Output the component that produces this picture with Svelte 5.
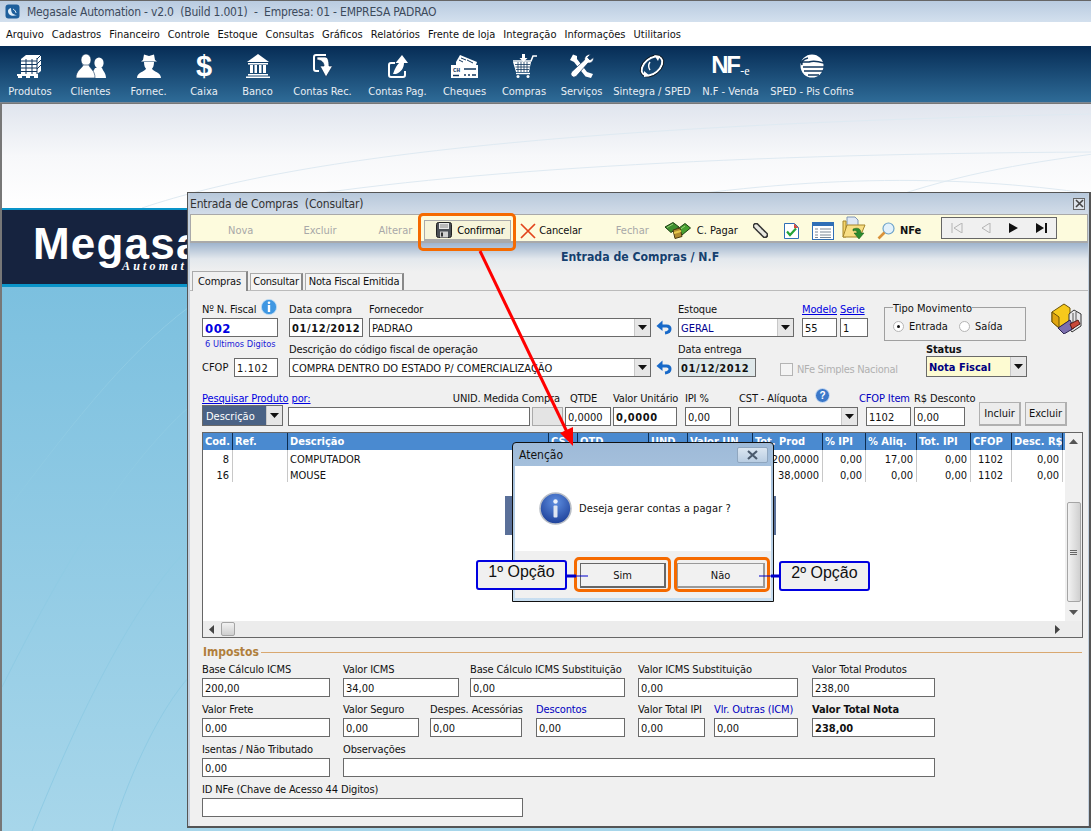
<script>
  const menu = ["Arquivo", "Cadastros", "Financeiro", "Controle", "Estoque", "Consultas", "Gráficos", "Relatórios", "Frente de loja", "Integração", "Informações", "Utilitarios"];

  const shortcuts = [
    { label: "Produtos", icon: "produtos", w: 44, gap: 8 },
    { label: "Clientes", icon: "clientes", w: 39, gap: 19 },
    { label: "Fornec.", icon: "fornec", w: 37, gap: 20 },
    { label: "Caixa", icon: "caixa", w: 28, gap: 23 },
    { label: "Banco", icon: "banco", w: 29, gap: 25 },
    { label: "Contas Rec.", icon: "rec", w: 59, gap: 21 },
    { label: "Contas Pag.", icon: "pag", w: 59, gap: 16 },
    { label: "Cheques", icon: "cheques", w: 43, gap: 16 },
    { label: "Compras", icon: "compras", w: 42, gap: 17 },
    { label: "Serviços", icon: "servicos", w: 41, gap: 16 },
    { label: "Sintegra / SPED", icon: "sintegra", w: 76, gap: 12 },
    { label: "N.F - Venda", icon: "nfe", w: 57, gap: 12 },
    { label: "SPED - Pis Cofins", icon: "sped", w: 82, gap: 12 }
  ];

  const columns = [
    { title: "Cod.", w: 30 },
    { title: "Ref.", w: 55 },
    { title: "Descrição", w: 261 },
    { title: "CST", w: 29 },
    { title: "QTD", w: 71 },
    { title: "UND", w: 39 },
    { title: "Valor UN", w: 65 },
    { title: "Tot. Prod", w: 70 },
    { title: "% IPI", w: 43 },
    { title: "% Aliq.", w: 51 },
    { title: "Tot. IPI", w: 54 },
    { title: "CFOP", w: 41 },
    { title: "Desc. R$", w: 51 }
  ];
  const template = columns.map((c) => c.w + "px").join(" ");

  const items = [
    ["8", "", "COMPUTADOR", "", "", "", "", "200,0000", "0,00", "17,00", "0,00", "1102", "0,00"],
    ["16", "", "MOUSE", "", "", "", "", "38,0000", "0,00", "0,00", "0,00", "1102", "0,00"]
  ];

  const taxRows = [
    [
      { label: "Base Cálculo ICMS", value: "200,00", w: 128, gap: 0, low: true },
      { label: "Valor ICMS", value: "34,00", w: 116, gap: 13 },
      { label: "Base Cálculo ICMS Substituição", value: "0,00", w: 155, gap: 11 },
      { label: "Valor ICMS Substituição", value: "0,00", w: 160, gap: 13 },
      { label: "Valor Total Produtos", value: "238,00", w: 123, gap: 14 }
    ],
    [
      { label: "Valor Frete", value: "0,00", w: 128, gap: 0 },
      { label: "Valor Seguro", value: "0,00", w: 76, gap: 13 },
      { label: "Despes. Acessórias", value: "0,00", w: 92, gap: 11 },
      { label: "Descontos", value: "0,00", w: 89, gap: 14, blue: true },
      { label: "Valor Total IPI", value: "0,00", w: 67, gap: 13 },
      { label: "Vlr. Outras (ICM)", value: "0,00", w: 84, gap: 9, blue: true },
      { label: "Valor Total Nota", value: "238,00", w: 123, gap: 14, strong: true }
    ],
    [
      { label: "Isentas / Não Tributado", value: "0,00", w: 128, gap: 0 },
      { label: "Observações", value: "", w: 592, gap: 13 }
    ],
    [{ label: "ID NFe (Chave de Acesso 44 Digitos)", value: "", w: 321, gap: 0 }]
  ];
</script>

{#snippet arrowButton()}
  <span class="drop"><svg width="9" height="5" viewBox="0 0 9 5"><path d="M0 0h9L4.5 5z" fill="#111" /></svg></span>
{/snippet}

{#snippet undo()}
  <svg class="undo" width="17" height="15" viewBox="0 0 17 15">
    <path d="M5 6H10.5C13 6 14 7.5 14 9C14 11 12.5 12.5 9 13" fill="none" stroke="#1769c9" stroke-width="3" />
    <path d="M0.5 6L6.5 0.5V11z" fill="#1769c9" />
  </svg>
{/snippet}

{#snippet infoDot(size)}
  <svg width={size} height={size} viewBox="0 0 16 16">
    <circle cx="8" cy="8" r="7.6" fill="#3f97e2" stroke="#bcdcf5" stroke-width="0.8" />
    <circle cx="8" cy="3.8" r="1.3" fill="#fff" />
    <rect x="6.8" y="6" width="2.4" height="7" fill="#fff" />
  </svg>
{/snippet}

{#snippet shortcutIcon(name)}
  {#if name === "produtos"}
    <svg width="26" height="24" viewBox="0 0 26 24">
      <path d="M4 5L9 1H24V17L20 20H4z" fill="#fff" />
      <path d="M4 7H20M4 10.5H20M4 14H20M4 17.5H20M9 5V20M15 5V20M20 4V20M20 5L24 1M20 10L24 6M20 15L24 11" stroke="#12375e" stroke-width="1" fill="none" />
      <rect x="0" y="20" width="21" height="2" fill="#fff" />
      <rect x="1" y="22" width="4" height="2" fill="#fff" /><rect x="9" y="22" width="4" height="2" fill="#fff" /><rect x="17" y="22" width="4" height="2" fill="#fff" />
    </svg>
  {:else if name === "clientes"}
    <svg width="30" height="24" viewBox="0 0 30 24">
      <ellipse cx="23" cy="9" rx="4.6" ry="5.6" fill="#fff" />
      <path d="M19 14C18 17 15 18 15 24H30C30 19 27 17 26 14z" fill="#fff" />
      <ellipse cx="10" cy="6" rx="5" ry="6" fill="#fff" stroke="#12375e" stroke-width="0.6" />
      <path d="M7 11C6 15 0 16 0 24H19C19 16 14 15 13 11z" fill="#fff" stroke="#12375e" stroke-width="0.6" />
    </svg>
  {:else if name === "fornec"}
    <svg width="24" height="24" viewBox="0 0 24 24">
      <path d="M6 6L7 0.5L12 2L17 0.5L18 6L20 7.5H4z" fill="#fff" />
      <path d="M7 8H17C17 12 16 13.5 15 14.5C16 18 24 18 24 24H0C0 18 8 18 9 14.5C8 13.5 7 12 7 8z" fill="#fff" />
    </svg>
  {:else if name === "caixa"}
    <span class="dollar">$</span>
  {:else if name === "banco"}
    <svg width="24" height="24" viewBox="0 0 24 24">
      <path d="M12 0L23 8H1z" fill="#fff" />
      <rect x="2" y="9" width="20" height="1.5" fill="#fff" />
      <path d="M4 11h3v8H4zM8.5 11h2.5v8H8.5zM13 11h2.5v8H13zM17 11h3v8h-3z" fill="#fff" />
      <rect x="2" y="20" width="20" height="1.5" fill="#fff" />
      <rect x="0" y="22.5" width="24" height="1.5" fill="#fff" />
    </svg>
  {:else if name === "rec"}
    <svg width="20" height="24" viewBox="0 0 20 24">
      <path d="M13 1H3Q1 1 1 3V15Q1 17 3 17H6" fill="none" stroke="#fff" stroke-width="2" />
      <path d="M4 3H12C15 3 16 7 16 12H19.5L13 23L7 12H11C11 8 8 6 4 6z" fill="#fff" stroke="#0c2c50" stroke-width="0.7" />
    </svg>
  {:else if name === "pag"}
    <svg width="20" height="24" viewBox="0 0 20 24">
      <path d="M7 9H3Q1 9 1 11V21Q1 23 3 23H15Q17 23 17 21V17" fill="none" stroke="#fff" stroke-width="2" />
      <path d="M5 20C7 14 9 11 11 9H7.5L14 1L20 9H16C16 14 13 18 8 20z" fill="#fff" />
    </svg>
  {:else if name === "cheques"}
    <svg width="27" height="24" viewBox="0 0 27 24">
      <path d="M5 8L9 1L26 8L25 11H5z" fill="#fff" />
      <path d="M10 4L15 6M8 6L12 8M16 6L22 9" stroke="#12375e" stroke-width="1" />
      <rect x="0" y="11" width="27" height="13" fill="#fff" />
      <text x="2" y="18" class="chq">CH</text>
      <path d="M13 15H25M2 21.5H8M13 21H15M17 21H19M21 21H25" stroke="#12375e" stroke-width="1.4" />
    </svg>
  {:else if name === "compras"}
    <svg width="25" height="24" viewBox="0 0 25 24">
      <path d="M1 7H19L21 2H25" fill="none" stroke="#fff" stroke-width="1.6" />
      <path d="M1 8H19L17 18H4z" fill="#fff" />
      <path d="M3 10.5H18M3.5 13H18M4 15.5H17M6 8V18M9 8V18M12 8V18M15 8V18" stroke="#12375e" stroke-width="0.8" />
      <path d="M7.5 4H10V0H13V4H15.5L11.5 8z" fill="#fff" />
      <path d="M4 19.5H18" stroke="#fff" stroke-width="1.4" />
      <circle cx="6" cy="22.5" r="1.5" fill="#fff" /><circle cx="16" cy="22.5" r="1.5" fill="#fff" />
    </svg>
  {:else if name === "servicos"}
    <svg width="24" height="24" viewBox="0 0 24 24">
      <path d="M3 0.5L7 2V5L17 18L23 20L21 24L15.5 22.5L4 8L0 6z" fill="#fff" />
      <path d="M23.5 3.5C24 7 21 9.5 18 9L6 22.5Q3.5 24 1.5 22Q0 20 1.5 18L14.5 6C14.5 2.5 17 0 20.5 0.5L17.5 3.5L20 6z" fill="#fff" stroke="#12375e" stroke-width="0.7" />
    </svg>
  {:else if name === "sintegra"}
    <svg width="26" height="24" viewBox="0 0 26 24">
      <ellipse cx="13" cy="12" rx="12" ry="7.5" transform="rotate(-40 13 12)" fill="none" stroke="#fff" stroke-width="2" />
      <ellipse cx="13" cy="12" rx="13.4" ry="9" transform="rotate(-40 13 12)" fill="none" stroke="#111" stroke-width="0.8" />
      <path d="M15 1L21 2L19 7zM5 17L11 22L5 23z" fill="#fff" />
      <path d="M11 8C9 11 9 13 11 16" stroke="#fff" stroke-width="1.4" fill="none" />
    </svg>
  {:else if name === "nfe"}
    <span class="nfe">NF<small>-e</small></span>
  {:else if name === "sped"}
    <svg width="24" height="24" viewBox="0 0 24 24">
      <circle cx="12" cy="12" r="11.5" fill="#fff" />
      <path d="M0 8H9Q14 6 24 9M3 13H24M4 17H23M8 21H19" stroke="#12375e" stroke-width="1.6" fill="none" />
      <path d="M8 4C3 5 1 8 2 11" stroke="#12375e" stroke-width="1.6" fill="none" />
    </svg>
  {/if}
{/snippet}

<div class="screen">
  <header class="titlebar">
    <svg width="15" height="15" viewBox="0 0 15 15">
      <rect x="0.5" y="0.5" width="14" height="14" rx="3" fill="#1e5f9c" />
      <path d="M3 7C3 11 7 13 12 11C8 11 6 9 6 4C4 4.5 3 5.5 3 7z" fill="#dfeefa" />
      <path d="M8 5C10 6 11 8 11 9" stroke="#dfeefa" fill="none" />
    </svg>
    <span>Megasale Automation - v2.0&nbsp; (Build 1.001)&nbsp; -&nbsp; Empresa: 01 - EMPRESA PADRAO</span>
  </header>

  <nav class="menubar">
    {#each menu as entry}
      <span>{entry}</span>
    {/each}
  </nav>

  <div class="shortcuts">
    {#each shortcuts as s}
      <div class="shortcut" style="width:{s.w}px;margin-left:{s.gap}px">
        <div class="shortcut-icon">{@render shortcutIcon(s.icon)}</div>
        <span>{s.label}</span>
      </div>
    {/each}
  </div>

  <main class="desktop">
    <div class="desk-top">
      <svg class="swirl" width="1091" height="104" viewBox="0 0 1091 104">
        <path d="M140 104C300 50 600 20 1091 10M230 104C400 70 700 50 1091 48M600 104C800 70 950 70 1091 90M860 104C950 70 1020 60 1091 50" fill="none" stroke="#dfeaf2" />
      </svg>
    </div>
    <div class="brand">
      <div class="brand-name">Megasale</div>
      <div class="brand-sub">Automation</div>
    </div>
    <div class="desk-blue">
      <svg class="swirl" width="187" height="544" viewBox="0 0 187 544">
        <path d="M0 230C60 150 120 70 187 20M0 400C60 280 120 180 187 120M30 544C80 420 130 320 187 260M110 544C130 480 160 420 187 390" fill="none" stroke="#8fcbe4" />
      </svg>
    </div>

    <section class="window">
      <div class="win-title">
        <span>Entrada de Compras&nbsp; (Consultar)</span>
        <span class="win-close"><svg width="9" height="9" viewBox="0 0 9 9"><path d="M1 1L8 8M8 1L1 8" stroke="#444" stroke-width="1.6" /></svg></span>
      </div>

      <div class="actions">
        <span class="act off nova">Nova</span>
        <span class="act off excluir">Excluir</span>
        <span class="act off alterar">Alterar</span>
        <button class="confirm">
          <svg width="16" height="16" viewBox="0 0 16 16">
            <rect x="0.5" y="0.5" width="15" height="15" rx="2" fill="#4b4f55" stroke="#222" />
            <rect x="3" y="1" width="10" height="6" fill="#e8e8e8" />
            <path d="M4 3H12M4 5H12" stroke="#888" />
            <rect x="4" y="9.5" width="8" height="6" fill="#d0d0d0" /><rect x="5" y="10.5" width="2" height="4" fill="#333" />
          </svg>
          Confirmar
        </button>
        <svg class="cancel-x" width="16" height="16" viewBox="0 0 16 16"><path d="M1 1L15 15M15 1L1 15" stroke="#e2441c" stroke-width="1.7" /></svg>
        <span class="act cancelar">Cancelar</span>
        <span class="act off fechar">Fechar</span>
        <svg class="money" width="26" height="17" viewBox="0 0 26 17">
          <path d="M0 5L8 0.5L14 5L6 10.5z" fill="#3f8f2f" stroke="#1c3f12" />
          <path d="M12 7.5L20 1.5L25.5 6L17 13z" fill="#46a030" stroke="#1c3f12" />
          <path d="M2 5.5L8 2M15 7.5L20 4" stroke="#9ad27a" fill="none" />
          <path d="M8 8L15 6L17 14.5L10 16.5z" fill="#b08c30" stroke="#4c3a10" />
          <path d="M9 11L16 9" stroke="#e8c84c" stroke-width="2" />
        </svg>
        <span class="act pagar">C. Pagar</span>
        <svg class="clip" width="15" height="15" viewBox="0 0 15 15">
          <path d="M3 3L12 12" stroke="#333" stroke-width="6.5" stroke-linecap="round" />
          <path d="M3 3L12 12" stroke="#e8e8e0" stroke-width="3.5" stroke-linecap="round" stroke-dasharray="2 1.5" />
        </svg>
        <svg class="doc" width="15" height="16" viewBox="0 0 15 16">
          <path d="M0.5 0.5H10.5L14.5 4.5V15.5H0.5z" fill="#fff" stroke="#2f6fb6" />
          <path d="M10 0.5V5H14.5z" fill="#d64a3a" />
          <path d="M3 8.5L6 12L12 5.5" fill="none" stroke="#23a338" stroke-width="2.2" />
        </svg>
        <svg class="list" width="22" height="18" viewBox="0 0 22 18">
          <rect x="0.5" y="0.5" width="21" height="17" fill="#fff" stroke="#2f6fb6" />
          <rect x="1" y="1" width="20" height="3" fill="#2f6fb6" />
          <path d="M3 7H6M8 7H19M3 10H6M8 10H19M3 13H6M8 13H19M3 15.5H6M8 15.5H19" stroke="#7a8794" />
        </svg>
        <svg class="folder" width="24" height="24" viewBox="0 0 24 24">
          <path d="M5 1H13L16 4V10H5z" fill="#dfe8f5" stroke="#7f95b4" />
          <path d="M1 5H4V21H1z" fill="#f5d56a" stroke="#a5852a" />
          <path d="M1 21L5 9H23L18 21z" fill="#f8de84" stroke="#a5852a" />
          <path d="M11 13C16 11 19 13 19 17H22L17 23L12 17H15C15 15 14 14 11 15z" fill="#2a8c2e" stroke="#175a1a" stroke-width="0.5" />
        </svg>
        <svg class="lens" width="18" height="18" viewBox="0 0 18 18">
          <circle cx="11.5" cy="6.5" r="5.5" fill="#e2f1fb" stroke="#6da3c9" stroke-width="1.2" />
          <path d="M7.5 10.5L1.5 16.5" stroke="#d9923a" stroke-width="2.6" />
        </svg>
        <b class="act nfe-act">NFe</b>
        <div class="pager">
          <svg width="12" height="10" viewBox="0 0 12 10"><path d="M1 0V10M11 0L3 5L11 10z" fill="none" stroke="#b4b4b4" /></svg>
          <svg width="10" height="10" viewBox="0 0 10 10"><path d="M9 0L1 5L9 10z" fill="none" stroke="#b4b4b4" /></svg>
          <svg width="9" height="10" viewBox="0 0 9 10"><path d="M0 0L9 5L0 10z" fill="#111" /></svg>
          <svg width="11" height="10" viewBox="0 0 11 10"><path d="M0 0L8 5L0 10zM9 0h2V10H9z" fill="#111" /></svg>
        </div>
      </div>

      <div class="banner">Entrada de Compras / N.F</div>

      <div class="tabs">
        <span class="tab active">Compras</span>
        <span class="tab t-con">Consultar</span>
        <span class="tab t-nota">Nota Fiscal Emitida</span>
      </div>

      <div class="body">
        <div class="row r1">
          <div class="field f-nf">
            <label class="with-dot">Nº N. Fiscal <span class="dot">{@render infoDot(16)}</span></label>
            <div class="box big-blue">002</div>
          </div>
          <div class="field f-data">
            <label>Data compra</label>
            <div class="box bold spaced">01/12/2012</div>
          </div>
          <div class="field f-forn">
            <label>Fornecedor</label>
            <div class="box sel">PADRAO{@render arrowButton()}</div>
          </div>
          {@render undo()}
          <div class="field f-est">
            <label>Estoque</label>
            <div class="box sel navy">GERAL{@render arrowButton()}</div>
          </div>
          <div class="field f-mod">
            <label class="link">Modelo</label>
            <div class="box">55</div>
          </div>
          <div class="field f-ser">
            <label class="link">Serie</label>
            <div class="box">1</div>
          </div>
          <fieldset class="tipo">
            <legend>Tipo Movimento</legend>
            <span class="radio on"></span><span class="rlabel">Entrada</span>
            <span class="radio second"></span><span class="rlabel">Saída</span>
          </fieldset>
          <svg class="cube" width="32" height="32" viewBox="0 0 32 32">
            <path d="M2 10L14 2L20 6V18L9 26L2 20z" fill="#f6c91c" stroke="#6b5208" />
            <path d="M2 10L9 15V26L2 20z" fill="#e0a510" stroke="#6b5208" />
            <path d="M19 12L24 8L31 12V24L22 30L19 26z" fill="#e8e8ea" stroke="#333" />
            <path d="M23 11V24M26 10V23" stroke="#555" />
            <path d="M8 26L20 18L24 26L14 32z" fill="#7c6fae" stroke="#2c2550" />
            <path d="M20 22L28 18L30 22L22 27z" fill="#c9483a" stroke="#521a14" />
          </svg>
        </div>

        <div class="row r2">
          <div class="f-cfop">
            <span class="hint">6 Ultimos Digitos</span>
            <div class="cfop-line"><span>CFOP</span><div class="box spaced">1.102</div></div>
          </div>
          <div class="field f-desc">
            <label>Descrição do código fiscal de operação</label>
            <div class="box sel">COMPRA DENTRO DO ESTADO P/ COMERCIALIZAÇÃO{@render arrowButton()}</div>
          </div>
          {@render undo()}
          <div class="field f-ent">
            <label>Data entrega</label>
            <div class="box bold spaced locked">01/12/2012</div>
          </div>
          <div class="nfe-check"><span class="check"></span>NFe Simples Nacional</div>
          <div class="field f-status">
            <label class="bold">Status</label>
            <div class="box sel status">Nota Fiscal{@render arrowButton()}</div>
          </div>
        </div>

        <div class="row r3">
          <div class="field f-busca">
            <label class="nowrap"><span class="link">Pesquisar Produto</span> <span class="link">por:</span></label>
            <div class="box sel dark">Descrição{@render arrowButton()}</div>
          </div>
          <div class="field f-prod">
            <label class="right">UNID. Medida Compra</label>
            <div class="pair"><div class="box"></div><div class="box unit"></div></div>
          </div>
          <div class="field f-qtde"><label>QTDE</label><div class="box">0,0000</div></div>
          <div class="field f-unit"><label>Valor Unitário</label><div class="box bold spaced">0,0000</div></div>
          <div class="field f-ipi"><label>IPI %</label><div class="box">0,00</div></div>
          <div class="field f-cst">
            <label class="with-dot">CST - Alíquota
              <svg class="help" width="15" height="15" viewBox="0 0 15 15">
                <circle cx="7.5" cy="7.5" r="7" fill="#3b78c9" stroke="#cfe0f5" />
                <text x="7.5" y="11" class="q">?</text>
              </svg>
            </label>
            <div class="box sel">{@render arrowButton()}</div>
          </div>
          <div class="field f-item"><label class="blue">CFOP Item</label><div class="box">1102</div></div>
          <div class="field f-desc2"><label>R$ Desconto</label><div class="box">0,00</div></div>
          <button class="plain b-inc">Incluir</button>
          <button class="plain b-exc">Excluir</button>
        </div>

        <div class="grid">
          <div class="grid-main">
            <div class="g-row g-head" style="grid-template-columns:{template}">
              {#each columns as c}
                <span>{c.title}</span>
              {/each}
            </div>
            {#each items as item}
              <div class="g-row g-item" style="grid-template-columns:{template}">
                {#each item as cell, i}
                  <span class:num={i !== 1 && i !== 2} class:ctr={i === 11}>{cell}</span>
                {/each}
              </div>
            {/each}
          </div>
          <div class="vscroll">
            <svg width="9" height="5" viewBox="0 0 9 5"><path d="M0 5L4.5 0L9 5z" fill="#555" /></svg>
            <div class="vthumb"><i></i><i></i><i></i></div>
            <svg width="9" height="5" viewBox="0 0 9 5"><path d="M0 0L4.5 5L9 0z" fill="#555" /></svg>
          </div>
          <div class="hscroll">
            <svg width="5" height="9" viewBox="0 0 5 9"><path d="M5 0L0 4.5L5 9z" fill="#444" /></svg>
            <div class="hthumb"></div>
            <svg class="hright" width="5" height="9" viewBox="0 0 5 9"><path d="M0 0L5 4.5L0 9z" fill="#444" /></svg>
          </div>
        </div>

        <div class="impostos"><b>Impostos</b><hr /></div>
        {#each taxRows as row}
          <div class="row tax">
            {#each row as f}
              <div class="field" style="width:{f.w}px;margin-left:{f.gap}px">
                <label class="nowrap" class:blue={f.blue} class:bold={f.strong}>{f.label}</label>
                <div class="box" class:bold={f.strong} class:low={f.low}>{f.value}</div>
              </div>
            {/each}
          </div>
        {/each}
      </div>
    </section>
  </main>

  <div class="shadow"></div>

  <div class="dialog">
    <div class="dlg-title">
      <span>Atenção</span>
      <span class="dlg-close"><svg width="11" height="10" viewBox="0 0 11 10"><path d="M1 1L10 9M10 1L1 9" stroke="#4b5b6e" stroke-width="2.2" /></svg></span>
    </div>
    <div class="dlg-body">
      <svg width="33" height="33" viewBox="0 0 33 33">
        <defs>
          <radialGradient id="ball" cx="0.5" cy="0.3" r="0.8"><stop offset="0" stop-color="#5e8ee0" /><stop offset="1" stop-color="#14358f" /></radialGradient>
        </defs>
        <circle cx="16.5" cy="16.5" r="15.5" fill="url(#ball)" stroke="#b9bec6" stroke-width="1.6" />
        <circle cx="16.5" cy="9.5" r="2.2" fill="#eef3fb" />
        <rect x="14.5" y="13.5" width="4" height="12" rx="1" fill="#dfe6f2" />
      </svg>
      <span>Deseja gerar contas a pagar ?</span>
    </div>
    <div class="dlg-foot">
      <button class="dlg-btn sim">Sim</button>
      <button class="dlg-btn nao">Não</button>
    </div>
  </div>

  <div class="mark mark-confirm"></div>
  <div class="mark mark-sim"></div>
  <div class="mark mark-nao"></div>

  <div class="note note-1">1º Opção</div>
  <div class="note note-2">2º Opção</div>

  <svg class="annot" width="1091" height="831" viewBox="0 0 1091 831">
    <path d="M480 251L567 432" stroke="#f00" stroke-width="3" fill="none" />
    <path d="M573 446L560 433L573 427z" fill="#f00" />
    <path d="M567 576H588M759 576H779" stroke="#00c" stroke-width="1.2" />
    <path d="M567 576H576M771 576H779" stroke="#00c" stroke-width="3" />
  </svg>
</div>

<style>
  :global(body) {
    margin: 0;
    background: #f0f0f0;
  }
  :global(#app) * {
    box-sizing: border-box;
  }

  .screen {
    position: relative;
    width: 1091px;
    height: 831px;
    overflow: hidden;
    display: flex;
    flex-direction: column;
    font-family: "DejaVu Sans Condensed", "DejaVu Sans", sans-serif;
    font-size: 11px;
    color: #111;
  }

  .titlebar {
    height: 22px;
    display: flex;
    align-items: center;
    gap: 7px;
    padding-left: 5px;
    border-top: 1px solid #666;
    background: linear-gradient(#b9cbe0, #d3e0ee);
    font-size: 12px;
    letter-spacing: -0.2px;
    color: #3c4a5c;
    white-space: pre;
  }

  .menubar {
    height: 24px;
    display: flex;
    align-items: center;
    gap: 8px;
    padding-left: 6px;
    background: #fff;
  }

  .shortcuts {
    height: 57px;
    display: flex;
    background: linear-gradient(#062c55, #2e6b97);
    color: #e8eef4;
    border-bottom: 1px solid #7c8894;
  }
  .shortcut {
    flex: none;
    display: flex;
    flex-direction: column;
    align-items: center;
    white-space: nowrap;
  }
  .shortcut-icon {
    height: 24px;
    margin-top: 8px;
    margin-bottom: 7px;
    display: flex;
    justify-content: center;
    align-items: center;
  }
  .dollar {
    font: bold 29px "Liberation Sans", sans-serif;
    color: #fff;
    line-height: 24px;
  }
  .nfe {
    font: bold 24px "Liberation Sans", sans-serif;
    letter-spacing: -2.5px;
    color: #fff;
    line-height: 24px;
  }
  .nfe small {
    font: 12px "Liberation Serif", serif;
    letter-spacing: 0;
    margin-left: 2px;
    vertical-align: -2px;
  }
  .chq {
    font: bold 6px "Liberation Mono", monospace;
    fill: #12375e;
  }

  .desktop {
    flex: 1;
    position: relative;
    display: flex;
    flex-direction: column;
    border-left: 2px solid #777;
    border-top: 1px solid #777;
  }
  .desk-top {
    height: 104px;
    position: relative;
    background: linear-gradient(#e0e5ee, #f7f8fa 50%, #fff);
  }
  .swirl {
    position: absolute;
    left: 0;
    top: 0;
  }
  .brand {
    height: 79px;
    padding: 11px 0 0 31px;
    border-top: 2px solid #0a94c9;
    border-bottom: 3px solid #0a94c9;
    background: #16233f;
    color: #fff;
    white-space: nowrap;
  }
  .brand-name {
    font: bold 44px/46px "Liberation Sans", sans-serif;
    letter-spacing: 1.2px;
  }
  .brand-sub {
    margin: -8px 0 0 89px;
    font: italic bold 12px/14px "Liberation Serif", serif;
    letter-spacing: 3.2px;
  }
  .desk-blue {
    flex: 1;
    position: relative;
    background: linear-gradient(#7cc0df, #a7d6ea);
  }

  .window {
    position: absolute;
    left: 185px;
    top: 88px;
    width: 904px;
    height: 636px;
    display: flex;
    flex-direction: column;
    padding: 0 1px 0 2px;
    background: #c3d0de;
    border: 1px solid #555;
    border-width: 1px 2px 2px 1px;
  }
  .win-title {
    height: 21px;
    flex: none;
    display: flex;
    align-items: center;
    justify-content: space-between;
    padding: 0 3px 0 0;
    font-size: 12px;
    letter-spacing: -0.15px;
    color: #333;
    background: linear-gradient(#b7c8db, #d2dce8);
  }
  .win-close {
    width: 12px;
    height: 12px;
    display: flex;
    align-items: center;
    justify-content: center;
    border: 1px solid #666;
    background: #dde3ea;
  }

  .actions {
    height: 29px;
    flex: none;
    display: flex;
    align-items: center;
    padding-top: 5px;
    background: #fdfbdd;
    border: 1px solid #a9a9a9;
    border-width: 1px 1px 2px 1px;
  }
  .act {
    flex: none;
    font-size: 11px;
    white-space: nowrap;
  }
  .off {
    color: #a8a8a8;
  }
  .nova { margin-left: 37px; }
  .excluir { margin-left: 50px; }
  .alterar { margin-left: 42px; }
  .confirm {
    flex: none;
    width: 87px;
    height: 21px;
    margin-left: 12px;
    display: flex;
    align-items: center;
    gap: 5px;
    padding: 0 0 0 11px;
    font: inherit;
    letter-spacing: -0.2px;
    background: #f6f4da;
    border: 1px solid #aaa;
    border-width: 1px 1px 2px 1px;
  }
  .cancel-x { flex: none; margin-left: 9px; }
  .cancelar { margin-left: 3px; letter-spacing: -0.15px; }
  .fechar { margin-left: 34px; }
  .money { flex: none; margin-left: 16px; }
  .pagar { margin-left: 6px; }
  .clip { flex: none; margin-left: 15px; }
  .doc { flex: none; margin-left: 16px; }
  .list { flex: none; margin-left: 13px; }
  .folder { flex: none; margin-left: 8px; margin-top: -5px; }
  .lens { flex: none; margin-left: 11px; }
  .nfe-act { margin-left: 5px; }
  .pager {
    flex: none;
    width: 116px;
    height: 22px;
    margin: -5px 0 0 20px;
    display: flex;
    align-items: center;
    gap: 18px;
    padding-left: 9px;
    border: 1px solid #666;
    background: #f0f0f0;
  }

  .banner {
    height: 29px;
    flex: none;
    padding: 7px 0 0 371px;
    font-size: 12.2px;
    font-weight: bold;
    color: #15406f;
    background: linear-gradient(#9fb4cd, #e3e8ed 55%, #f0f0f0);
  }

  .tabs {
    height: 19px;
    flex: none;
    display: flex;
    align-items: flex-end;
    gap: 2px;
    padding-left: 2px;
    background: #f0f0f0;
    border-bottom: 1px solid #bbb;
    letter-spacing: -0.2px;
  }
  .tab {
    height: 17px;
    padding-top: 1px;
    text-align: center;
    border: 1px solid #aaa;
    border-bottom: 0;
    border-right: 2px solid #888;
    background: #f4f4f4;
  }
  .tab.active {
    width: 56px;
    height: 20px;
    margin-bottom: -1px;
    padding-top: 3px;
    background: #f0f0f0;
  }
  .t-con { width: 53px; }
  .t-nota { width: 99px; }

  .body {
    flex: 1;
    padding: 12px 0 0 12px;
    background: #f0f0f0;
  }
  .row {
    display: flex;
    height: 34px;
  }
  .r2 { margin-top: 6px; }
  .r3 { margin-top: 15px; }
  .field {
    flex: none;
    display: flex;
    flex-direction: column;
    min-width: 0;
  }
  label {
    height: 15px;
    line-height: 13px;
    white-space: nowrap;
    letter-spacing: -0.13px;
  }
  .nowrap { white-space: nowrap; }
  .with-dot {
    display: flex;
    gap: 5px;
  }
  .dot { margin-top: -4px; }
  .link {
    color: #0000e0;
    text-decoration: underline;
  }
  .blue { color: #0000c0; }
  .right {
    text-align: right;
    padding-right: 3px;
  }
  .bold { font-weight: bold; }
  .spaced { letter-spacing: 0.6px; }

  .box {
    position: relative;
    height: 19px;
    flex: none;
    padding: 1px 2px 0;
    line-height: 17px;
    background: #fff;
    border: 1px solid #6a6a6a;
    white-space: nowrap;
    overflow: hidden;
  }
  .low { margin-top: 1px; }
  .big-blue {
    font-size: 13px;
    font-weight: bold;
    color: #0000e0;
    letter-spacing: 0.5px;
  }
  .sel { padding-right: 20px; }
  .navy { color: #000090; }
  .drop {
    position: absolute;
    right: 0;
    top: 0;
    bottom: 0;
    width: 16px;
    display: flex;
    align-items: center;
    justify-content: center;
    background: #e6e6e6;
    border-left: 1px solid #c8c8c8;
  }
  .undo {
    flex: none;
    align-self: flex-end;
    margin: 0 0 2px 5px;
  }

  .f-nf { width: 76px; }
  .f-data { width: 74px; margin-left: 11px; }
  .f-forn { width: 282px; margin-left: 6px; }
  .f-est { width: 116px; margin-left: 5px; }
  .f-mod { width: 35px; margin-left: 8px; }
  .f-ser { width: 28px; margin-left: 3px; }
  .tipo {
    flex: none;
    width: 142px;
    height: 40px;
    margin: -2px 0 0 16px;
    padding: 7px 0 0 8px;
    border: 1px solid #a0a0a0;
    display: block;
  }
  .tipo legend {
    padding: 0;
    margin-left: 0;
    line-height: 12px;
    position: relative;
    top: 2px;
  }
  .radio {
    display: inline-block;
    width: 11px;
    height: 11px;
    border: 1px solid #b5b5b5;
    border-radius: 50%;
    background: #fff;
    vertical-align: -2px;
    position: relative;
  }
  .radio.on::after {
    content: "";
    position: absolute;
    left: 3px;
    top: 3px;
    width: 3px;
    height: 3px;
    border-radius: 50%;
    background: #111;
  }
  .rlabel { margin-left: 5px; }
  .second { margin-left: 8px; }
  .cube {
    flex: none;
    margin: -1px 0 0 24px;
  }

  .f-cfop {
    flex: none;
    width: 76px;
    height: 34px;
    display: flex;
    flex-direction: column;
    justify-content: space-between;
  }
  .hint {
    margin: -5px 0 0 3px;
    font-size: 9.2px;
    line-height: 12px;
    color: #2020d8;
    white-space: nowrap;
  }
  .cfop-line {
    display: flex;
    align-items: center;
    justify-content: space-between;
  }
  .cfop-line .box { width: 44px; }
  .f-desc { width: 362px; margin-left: 11px; }
  .f-ent { width: 78px; margin-left: 5px; }
  .locked { background: #dfe8ea; }
  .nfe-check {
    flex: none;
    width: 146px;
    margin: 19px 0 0 24px;
    display: flex;
    align-items: center;
    gap: 4px;
    height: 15px;
    color: #b0b0b0;
    letter-spacing: -0.3px;
    white-space: nowrap;
  }
  .check {
    width: 13px;
    height: 13px;
    border: 1px solid #b4b4b4;
    background: #f4f4f4;
  }
  .f-status { width: 101px; }
  .status {
    height: 21px;
    line-height: 20px;
    font-weight: bold;
    color: #000080;
    background: #fdfbd2;
  }

  .f-busca { width: 81px; }
  .dark {
    height: 21px;
    line-height: 19px;
    color: #fff;
    background: #4a6285;
    overflow: visible;
    padding-left: 3px;
  }
  .f-prod { width: 275px; margin-left: 5px; }
  .pair {
    display: flex;
    gap: 2px;
  }
  .pair .box { flex: 1; }
  .pair .unit {
    flex: none;
    width: 31px;
    background: #e4e4e4;
    border-color: #aaa;
  }
  .f-qtde { width: 46px; margin-left: 2px; }
  .f-qtde label { padding-left: 5px; }
  .f-unit { width: 64px; margin-left: 2px; }
  .f-ipi { width: 46px; margin-left: 8px; }
  .f-cst { width: 120px; margin-left: 7px; }
  .f-cst label { gap: 8px; padding-left: 1px; }
  .help { margin-top: -4px; flex: none; }
  .q {
    font: bold 10px "Liberation Sans", sans-serif;
    fill: #fff;
    text-anchor: middle;
  }
  .f-item { width: 45px; margin-left: 8px; }
  .f-item label { margin-left: -7px; }
  .f-desc2 { width: 51px; margin-left: 3px; }
  .plain {
    flex: none;
    align-self: flex-end;
    width: 42px;
    height: 24px;
    padding: 0;
    font: inherit;
    color: #111;
    background: #ececec;
    border: 1px solid #b0b0b0;
    border-width: 1px 2px 2px 1px;
  }
  .b-inc { margin-left: 14px; }
  .b-exc { margin-left: 4px; }

  .grid {
    width: 881px;
    height: 206px;
    margin-top: 6px;
    display: grid;
    grid-template-columns: 1fr 17px;
    grid-template-rows: 1fr 16px;
    border: 1px solid #666;
    background: #fff;
  }
  .grid-main {
    overflow: hidden;
  }
  .g-row {
    display: grid;
    white-space: nowrap;
  }
  .g-head {
    height: 17px;
    line-height: 17px;
    font-weight: bold;
    color: #fff;
    background: #4a8ad0;
    width: 862px;
  }
  .g-head span {
    padding-left: 2px;
    border-right: 1px solid #0c2c50;
    overflow: hidden;
  }
  .g-item {
    height: 16px;
    line-height: 13px;
  }
  .g-item span {
    padding: 3px 3px 0 2px;
    border-right: 1px solid #c8c8c8;
  }
  .g-item .num { text-align: right; }
  .g-item .ctr { text-align: center; }
  .vscroll {
    display: flex;
    flex-direction: column;
    align-items: center;
    padding-top: 6px;
    background: #f0f0f0;
  }
  .vscroll svg { flex: none; }
  .vthumb {
    flex: none;
    width: 14px;
    height: 100px;
    margin: 58px 0 8px;
    display: flex;
    flex-direction: column;
    justify-content: center;
    align-items: center;
    gap: 1px;
    border: 1px solid #a5a5a5;
    border-radius: 2px;
    background: linear-gradient(90deg, #f2f2f2, #d0d0d0);
  }
  .vthumb i {
    width: 7px;
    height: 1px;
    background: #666;
  }
  .hscroll {
    grid-column: 1 / 3;
    display: flex;
    align-items: center;
    padding-left: 6px;
    gap: 7px;
    background: #ececec;
  }
  .hthumb {
    width: 14px;
    height: 14px;
    border: 1px solid #a5a5a5;
    border-radius: 2px;
    background: linear-gradient(#f2f2f2, #cfcfcf);
  }
  .hright { margin-left: 813px; }

  .impostos {
    display: flex;
    align-items: center;
    height: 15px;
    margin-top: 6px;
    margin-bottom: 4px;
    color: #b07f3c;
  }
  .impostos b { font-size: 12px; padding-left: 1px; }
  .impostos hr {
    flex: none;
    width: 821px;
    margin: 2px 0 0 2px;
    border: 0;
    border-top: 1px solid #d9a870;
  }
  .tax {
    height: 34px;
    margin-bottom: 6px;
  }

  .shadow {
    position: absolute;
    left: 505px;
    top: 496px;
    width: 271px;
    height: 39px;
    background: #5a7099;
  }

  .dialog {
    position: absolute;
    left: 512px;
    top: 442px;
    width: 262px;
    height: 160px;
    display: flex;
    flex-direction: column;
    padding: 0 2px 3px;
    background: linear-gradient(#9ebad8, #c8def0);
    border: 1px solid #111;
    border-top-left-radius: 4px;
    border-top-right-radius: 4px;
  }
  .dlg-title {
    height: 23px;
    flex: none;
    display: flex;
    align-items: center;
    justify-content: space-between;
    padding: 0 3px 0 4px;
    font-size: 12px;
    color: #111;
  }
  .dlg-close {
    width: 31px;
    height: 16px;
    display: flex;
    align-items: center;
    justify-content: center;
    border: 1px solid #8fa6bf;
    border-radius: 2px;
    background: linear-gradient(#dbe6f1, #b9cde2);
  }
  .dlg-body {
    flex: 1;
    display: flex;
    align-items: center;
    gap: 7px;
    padding: 0 0 0 24px;
    background: #fff;
    letter-spacing: 0.1px;
  }
  .dlg-foot {
    height: 47px;
    flex: none;
    position: relative;
    display: flex;
    gap: 11px;
    padding: 12px 0 0 65px;
    background: #f0f0f0;
  }
  .dlg-btn {
    height: 25px;
    padding: 0;
    font: inherit;
    color: #111;
    background: #f1f1f1;
    border: 1px solid #9a9a9a;
    border-width: 1px 2px 2px 1px;
  }
  .sim { width: 86px; border-color: #666; }
  .nao { width: 88px; }

  .mark {
    position: absolute;
    border: 3px solid #f56a00;
    border-radius: 5px;
  }
  .mark-confirm { left: 418px; top: 213px; width: 98px; height: 38px; }
  .mark-sim { left: 574px; top: 557px; width: 97px; height: 35px; }
  .mark-nao { left: 674px; top: 557px; width: 96px; height: 35px; }

  .note {
    position: absolute;
    width: 91px;
    height: 30px;
    padding-top: 0;
    text-align: center;
    font: 16px/19px "Liberation Sans", sans-serif;
    color: #111;
    background: #f0f0f0;
    border: 2px solid #0000e0;
    border-radius: 3px;
  }
  .note-1 { left: 476px; top: 560px; }
  .note-2 { left: 779px; top: 561px; }

  .annot {
    position: absolute;
    left: 0;
    top: 0;
    pointer-events: none;
  }
</style>
